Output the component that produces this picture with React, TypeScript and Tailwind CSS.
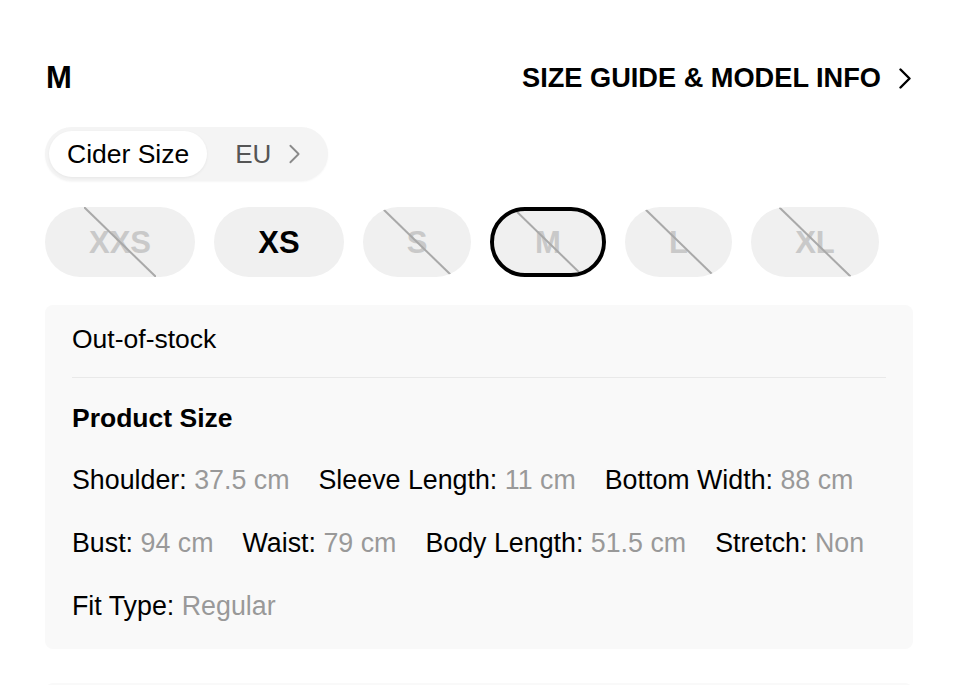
import React from "react";

const sizes = [
  { label: "XXS", w: "w-[150px]", disabled: true, selected: false },
  { label: "XS", w: "w-[130px]", disabled: false, selected: false },
  { label: "S", w: "w-[108px]", disabled: true, selected: false },
  { label: "M", w: "w-[116px]", disabled: true, selected: true },
  { label: "L", w: "w-[107px]", disabled: true, selected: false },
  { label: "XL", w: "w-[128px]", disabled: true, selected: false },
];

const rows: [string, string][][] = [
  [
    ["Shoulder:", "37.5 cm"],
    ["Sleeve Length:", "11 cm"],
    ["Bottom Width:", "88 cm"],
  ],
  [
    ["Bust:", "94 cm"],
    ["Waist:", "79 cm"],
    ["Body Length:", "51.5 cm"],
    ["Stretch:", "Non"],
  ],
  [["Fit Type:", "Regular"]],
];

function Chevron({ className, color, sw }: { className: string; color: string; sw: number }) {
  return (
    <svg className={className} viewBox="0 0 12 21" fill="none">
      <path d="M1.5 1.5 L10.5 10.5 L1.5 19.5" stroke={color} strokeWidth={sw} strokeLinecap="round" strokeLinejoin="round" />
    </svg>
  );
}

export default function App() {
  return (
    <div className="w-[960px] h-[685px] overflow-hidden bg-white px-[45px] pt-[60px] font-['Liberation_Sans',Arial,sans-serif] text-black">
      <div className="flex items-center justify-between pr-[4px]">
        <div className="text-[31px] font-bold leading-[36px] pl-[1px]">M</div>
        <div className="flex items-center gap-[18px]">
          <span className="text-[27.2px] font-bold leading-[36px]">SIZE GUIDE &amp; MODEL INFO</span>
          <Chevron className="w-[12px] h-[21px]" color="#000" sw={2.4} />
        </div>
      </div>

      <div className="mt-[31px] flex">
        <div className="flex items-center rounded-full bg-[#f4f4f4] p-[4px] pr-[28px] shadow-[0_1px_2px_rgba(0,0,0,0.04)]">
          <div className="h-[46px] rounded-full bg-white px-[18px] flex items-center text-[26.5px] leading-none shadow-[0_1px_3px_rgba(0,0,0,0.06)]">
            Cider Size
          </div>
          <div className="ml-[28px] flex items-center gap-[18px]">
            <span className="text-[26px] leading-none text-[#555]">EU</span>
            <Chevron className="w-[11px] h-[20px]" color="#8a8a8a" sw={2} />
          </div>
        </div>
      </div>

      <div className="mt-[26px] flex gap-[19px]">
        {sizes.map((s) => (
          <div
            key={s.label}
            className={`relative h-[70px] ${s.w} rounded-full bg-[#f0f0f0] flex items-center justify-center overflow-hidden ${
              s.selected ? "border-[4px] border-black" : ""
            }`}
          >
            <span className={`text-[31px] font-bold leading-none ${s.disabled ? "text-[#c9c9c9]" : "text-black"}`}>
              {s.label}
            </span>
            {s.disabled && (
              <svg className="absolute left-1/2 top-1/2 w-[72px] h-[70px] -translate-x-1/2 -translate-y-1/2" viewBox="0 0 72 70">
                <line x1="0" y1="0" x2="72" y2="70" stroke="#a9a9a9" strokeWidth="2" />
              </svg>
            )}
          </div>
        ))}
      </div>

      <div className="mt-[28px] rounded-[8px] bg-[#f9f9f9] px-[27px] pt-[18px] pb-[27px] mr-[2px]">
        <div className="text-[26.5px] leading-[32px]">Out-of-stock</div>
        <div className="mt-[22px] h-[1px] bg-[#e9e9e9]" />
        <div className="mt-[24px] text-[26.5px] font-bold leading-[32px]">Product Size</div>
        <div className="mt-[30px] flex flex-col gap-[31px]">
          {rows.map((row, i) => (
            <div key={i} className="flex gap-[29px] text-[26.8px] leading-[32px] whitespace-nowrap">
              {row.map(([k, v]) => (
                <span key={k}>
                  {k} <span className="text-[#999]">{v}</span>
                </span>
              ))}
            </div>
          ))}
        </div>
      </div>

      <div className="mt-[34px] h-[40px] rounded-[8px] bg-[#f9f9f9] mr-[2px]" />
    </div>
  );
}
